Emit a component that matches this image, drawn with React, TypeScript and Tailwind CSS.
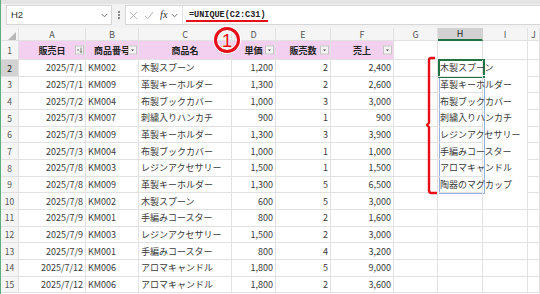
import clsx from 'clsx'

const COLS = ['A', 'B', 'C', 'D', 'E', 'F', 'G', 'H', 'I', 'J']
const HEADERS = ['販売日', '商品番号', '商品名', '単価', '販売数', '売上']

const ROWS: string[][] = [
  ['2025/7/1', 'KM002', '木製スプーン', '1,200', '2', '2,400'],
  ['2025/7/1', 'KM009', '革製キーホルダー', '1,300', '2', '2,600'],
  ['2025/7/2', 'KM004', '布製ブックカバー', '1,000', '3', '3,000'],
  ['2025/7/3', 'KM007', '刺繍入りハンカチ', '900', '1', '900'],
  ['2025/7/3', 'KM009', '革製キーホルダー', '1,300', '3', '3,900'],
  ['2025/7/3', 'KM004', '布製ブックカバー', '1,000', '1', '1,000'],
  ['2025/7/8', 'KM003', 'レジンアクセサリー', '1,500', '1', '1,500'],
  ['2025/7/8', 'KM009', '革製キーホルダー', '1,300', '5', '6,500'],
  ['2025/7/8', 'KM002', '木製スプーン', '600', '5', '3,000'],
  ['2025/7/9', 'KM001', '手編みコースター', '800', '2', '1,600'],
  ['2025/7/9', 'KM003', 'レジンアクセサリー', '1,500', '2', '3,000'],
  ['2025/7/9', 'KM001', '手編みコースター', '800', '4', '3,200'],
  ['2025/7/12', 'KM006', 'アロマキャンドル', '1,800', '5', '9,000'],
  ['2025/7/12', 'KM006', 'アロマキャンドル', '1,800', '2', '3,600'],
]

// what =UNIQUE(C2:C31) spills into H2:H9
const UNIQUE = [
  '木製スプーン',
  '革製キーホルダー',
  '布製ブックカバー',
  '刺繍入りハンカチ',
  'レジンアクセサリー',
  '手編みコースター',
  'アロマキャンドル',
  '陶器のマグカップ',
]

const RIGHT = [true, false, false, true, true, true]

function Chevron({ className }: { className?: string }) {
  return (
    <svg width="7" height="5" viewBox="0 0 7 5" className={className}>
      <path d="M0.8 1 L3.5 3.8 L6.2 1" fill="none" stroke="#666" strokeWidth="0.9" />
    </svg>
  )
}

function FilterButton({ sorted }: { sorted?: boolean }) {
  return (
    <div className="absolute right-[1px] top-1/2 flex h-[9px] w-[9px] -translate-y-1/2 items-center justify-center border border-[#c4c4c4] bg-[#f4f4f4]">
      <svg width="7" height="7" viewBox="0 0 7 7">
        {sorted ? (
          <>
            <path d="M1 3 L3 3 L2 4.6 Z" fill="#444" />
            <path d="M5 1 V6 M4 5 L5 6 L6 5" fill="none" stroke="#444" strokeWidth="0.7" />
          </>
        ) : (
          <path d="M2 3 L5 3 L3.5 4.8 Z" fill="#444" />
        )}
      </svg>
    </div>
  )
}

function Cell({ className, children }: { className?: string; children?: React.ReactNode }) {
  return (
    <div
      className={clsx(
        'relative flex items-center whitespace-nowrap border-b border-r border-[#e1e1e1] px-[2px] leading-none',
        className,
      )}
    >
      {children}
    </div>
  )
}

export default function App() {
  return (
    <div className="relative h-[294px] w-[540px] overflow-hidden border-l border-[#5fae7d] bg-white font-['Noto_Sans_CJK_JP',sans-serif] text-[9px] text-[#3a3a3a]">
      <div className="h-[4px] bg-[#e4e4e4]" />

      {/* formula bar */}
      <div className="flex h-[24px] items-start bg-[#f2f2f2] pl-[5px] pt-[1px]">
        <div className="flex h-[20px] w-[106px] items-center justify-between border border-[#d6d6d6] bg-white pl-[4px] pr-[3px] font-['Liberation_Sans',sans-serif] text-[9.5px] text-[#333]">
          <span>H2</span>
          <Chevron />
        </div>
        <div className="flex h-[20px] w-[13px] items-center justify-center">
          <svg width="2" height="8" viewBox="0 0 2 8">
            <circle cx="1" cy="1" r="0.9" fill="#555" />
            <circle cx="1" cy="4" r="0.9" fill="#555" />
            <circle cx="1" cy="7" r="0.9" fill="#555" />
          </svg>
        </div>
        <div className="flex h-[20px] flex-1 items-center border border-r-0 border-[#d6d6d6] bg-white">
          <div className="flex h-full w-[56px] items-center gap-[6px] pl-[3px]">
            <svg width="9" height="9" viewBox="0 0 9 9">
              <path d="M1 1 L8 8 M8 1 L1 8" stroke="#a6a6a6" strokeWidth="0.8" />
            </svg>
            <svg width="10" height="9" viewBox="0 0 10 9">
              <path d="M1 5 L3.8 7.8 L9 1" fill="none" stroke="#a6a6a6" strokeWidth="0.8" />
            </svg>
            <span className="font-['Liberation_Serif',serif] text-[10.5px] italic leading-none text-[#333]">fx</span>
            <Chevron className="-ml-[3px]" />
          </div>
          <div className="h-full w-px bg-[#e0e0e0]" />
          <div className="relative flex h-full items-center pl-[6px]">
            <span className="font-['Liberation_Mono',monospace] text-[8.5px] font-bold leading-none text-[#222]">
              =UNIQUE(C2:C31)
            </span>
            <div className="absolute bottom-[2px] left-[3px] h-[2px] w-[82px] bg-[#e60f17]" />
          </div>
        </div>
      </div>

      {/* sheet */}
      <div className="grid grid-cols-[18px_67px_53px_93px_44px_55px_63px_44px_45px_45px_12px] grid-rows-[13px_19px_repeat(14,16.67px)]">
        <Cell className="justify-end border-[#d0d0d0] bg-[#f5f5f5] p-0">
          <svg width="9" height="9" viewBox="0 0 9 9" className="self-end">
            <path d="M9 1 L9 9 L1 9 Z" fill="#b8b8b8" />
          </svg>
        </Cell>
        {COLS.map((c) => (
          <Cell
            key={c}
            className={clsx(
              'justify-center text-[9px]',
              c === 'H'
                ? 'border-b-2 border-b-[#217346] border-r-[#d0d0d0] bg-[#d2d2d2] text-[#222]'
                : 'border-[#d6d6d6] bg-[#f5f5f5] text-[#555]',
            )}
          >
            {c}
          </Cell>
        ))}

        <Cell className="justify-center border-[#d6d6d6] bg-[#f5f5f5] text-[8.5px] text-[#555]">1</Cell>
        {HEADERS.map((h, i) => (
          <Cell key={h} className="justify-center border-[#d9d9d9] bg-[#f3d0ef] font-bold text-[#222]">
            <span>{h}</span>
            <FilterButton sorted={i === 0} />
          </Cell>
        ))}
        <Cell />
        <Cell />
        <Cell />
        <Cell />

        {ROWS.map((r, ri) => {
          const n = ri + 2
          return [
            <Cell
              key={`n${n}`}
              className={clsx(
                'justify-center border-[#d6d6d6] text-[8.5px]',
                n === 2 ? 'bg-[#d2d2d2] text-[#222]' : 'bg-[#f5f5f5] text-[#555]',
              )}
            >
              {n}
            </Cell>,
            ...r.map((v, ci) => (
              <Cell key={`${n}-${ci}`} className={clsx('overflow-hidden', RIGHT[ci] && 'justify-end')}>
                {v}
              </Cell>
            )),
            <Cell key={`${n}g`} />,
            <Cell key={`${n}h`} className="z-10 overflow-visible">
              {UNIQUE[ri]}
            </Cell>,
            <Cell key={`${n}i`} className={ri < 8 ? 'border-b-0' : ''} />,
            <Cell key={`${n}j`} />,
          ]
        })}
      </div>

      {/* spill range outline and active cell */}
      <div className="pointer-events-none absolute left-[438px] top-[60px] h-[134px] w-[46px] border border-[#94b1e0]" />
      <div className="pointer-events-none absolute left-[437px] top-[59px] h-[19px] w-[47px] border-2 border-[#217346]">
        <div className="absolute -bottom-[3px] -right-[3px] h-[4px] w-[4px] border border-white bg-[#217346]" />
      </div>

      {/* annotation: red bracket */}
      <svg className="pointer-events-none absolute left-[422px] top-[54px]" width="18" height="144" viewBox="0 0 18 144">
        <path
          d="M12 4 H8 Q6 4 6 6.5 V69 L4 71 L6 73 V136.5 Q6 139 8.5 139 H14"
          fill="none"
          stroke="#e60f17"
          strokeWidth="2.4"
          strokeLinejoin="round"
        />
      </svg>

      {/* annotation: circled 1 */}
      <div className="pointer-events-none absolute left-[213px] top-[27px] flex h-[26px] w-[26px] items-center justify-center rounded-full border-[3px] border-[#e60f17] shadow-[0_0_0_1px_white,inset_0_0_0_1px_white]">
        <span className="font-['Liberation_Sans',sans-serif] text-[19px] font-normal leading-none text-[#e60f17] [text-shadow:0_0_1px_white,0_0_1px_white,0_0_1px_white]">
          1
        </span>
      </div>
    </div>
  )
}
